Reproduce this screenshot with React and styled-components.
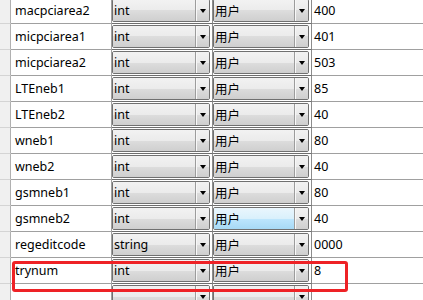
import React from 'react'
import styled, { createGlobalStyle, css } from 'styled-components'

const rows = [
  { name: 'macpciarea2', type: 'int', owner: '用户', value: '400' },
  { name: 'micpciarea1', type: 'int', owner: '用户', value: '401' },
  { name: 'micpciarea2', type: 'int', owner: '用户', value: '503' },
  { name: 'LTEneb1', type: 'int', owner: '用户', value: '85' },
  { name: 'LTEneb2', type: 'int', owner: '用户', value: '40' },
  { name: 'wneb1', type: 'int', owner: '用户', value: '80' },
  { name: 'wneb2', type: 'int', owner: '用户', value: '40' },
  { name: 'gsmneb1', type: 'int', owner: '用户', value: '80' },
  { name: 'gsmneb2', type: 'int', owner: '用户', value: '40', hot: true },
  { name: 'regeditcode', type: 'string', owner: '用户', value: '0000' },
  { name: 'trynum', type: 'int', owner: '用户', value: '8' },
  { name: '', type: '', owner: '', value: '' },
]

const GlobalStyle = createGlobalStyle`
  html, body {
    margin: 0;
    background: #fff;
    overflow: hidden;
  }
  body {
    font-family: "Noto Sans", "Noto Sans CJK SC", sans-serif;
    font-size: 12.5px;
    color: #000;
  }
`

const Sheet = styled.div`
  position: relative;
  margin-top: -2px;
  width: 423px;
`

const Row = styled.div`
  display: grid;
  grid-template-columns: 11px 101px 101px 99px 1fr;
  height: 26px;
`

const Cell = styled.div`
  box-sizing: border-box;
  height: 26px;
  border-right: 1px solid #a0a0a0;
  border-bottom: 1px solid #a0a0a0;
  display: flex;
  align-items: center;
  white-space: nowrap;
  overflow: hidden;
`

const Header = styled(Cell)`
  background: #f0f0f0;
  border-bottom-color: #d4d4d4;
  border-right-color: #b0b0b0;
`

const NameCell = styled(Cell)`
  padding-left: 4px;
`

const ValueCell = styled(Cell)`
  border-right: none;
  padding-left: 2px;
`

const ComboCell = styled(Cell)`
  align-items: flex-start;
  padding: 1px 2px 0 0;
  border-right-color: #8c8c8c;
  border-bottom-color: #6e6e6e;
`

const Combo = styled.div`
  box-sizing: border-box;
  flex: 1;
  height: 23px;
  display: flex;
  border: 1px solid #707070;
  border-radius: 2px;
  overflow: hidden;
`

const buttonFace = css`
  background: linear-gradient(#f2f2f2 0%, #ebebeb 50%, #dddddd 50%, #cfcfcf 100%);
`

const ComboText = styled.div`
  flex: 1;
  display: flex;
  align-items: center;
  padding-left: 1px;
  ${buttonFace}
  ${({ $hot }) =>
    $hot &&
    css`
      background: linear-gradient(#eaf6fd 0%, #d9f0fc 50%, #bee6fd 50%, #a7d9f5 100%);
    `}
`

const DropButton = styled.div`
  width: 13px;
  border-left: 1px solid #9c9c9c;
  box-shadow: inset 1px 0 0 #f8f8f8;
  display: flex;
  align-items: center;
  justify-content: center;
  ${buttonFace}
`

const Arrow = styled.span`
  width: 0;
  height: 0;
  border-left: 3.5px solid transparent;
  border-right: 3.5px solid transparent;
  border-top: 4px solid #000;
`

const Mark = styled.div`
  position: absolute;
  left: 12px;
  top: 263px;
  width: 336px;
  height: 31px;
  box-sizing: border-box;
  border: 3px solid #ee2226;
  border-radius: 3px;
  pointer-events: none;
`

const ComboBox = ({ text, hot }) => (
  <ComboCell>
    <Combo>
      <ComboText $hot={hot}>{text}</ComboText>
      <DropButton>
        <Arrow />
      </DropButton>
    </Combo>
  </ComboCell>
)

const App = () => {
  return (
    <>
      <GlobalStyle />
      <Sheet>
        {rows.map((r, i) => (
          <Row key={i}>
            <Header />
            <NameCell>{r.name}</NameCell>
            <ComboBox text={r.type} />
            <ComboBox text={r.owner} hot={r.hot} />
            <ValueCell>{r.value}</ValueCell>
          </Row>
        ))}
        <Mark />
      </Sheet>
    </>
  )
}

export default App
